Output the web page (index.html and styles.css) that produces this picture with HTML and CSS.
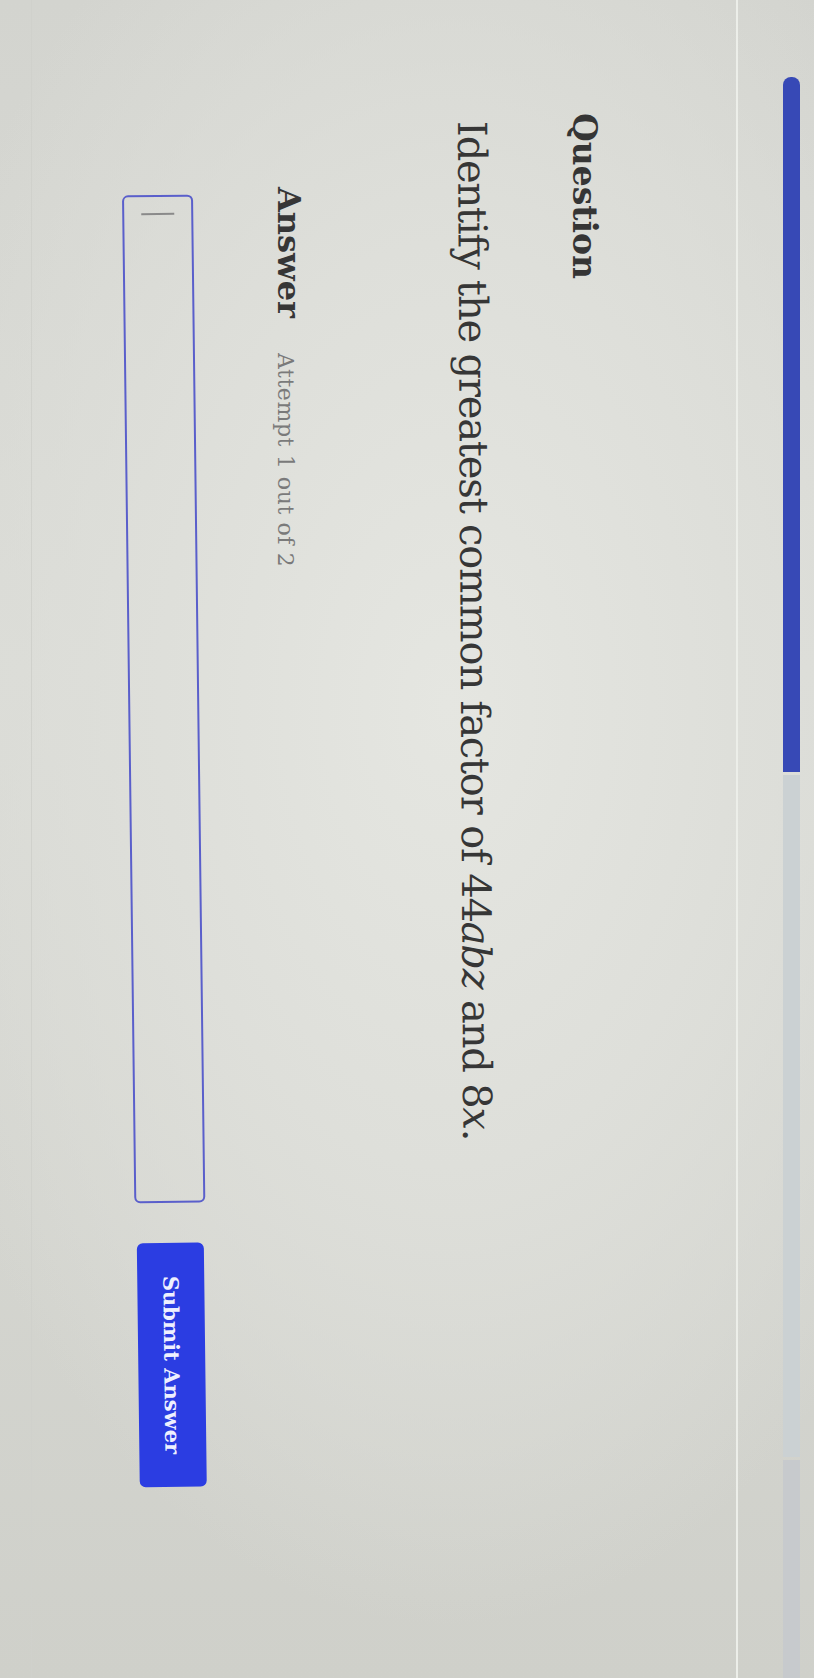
FILE: index.html
```html
<!DOCTYPE html>
<html lang="en">
<head>
<meta charset="utf-8">
<title>Question</title>
<link rel="stylesheet" href="styles.css">
</head>
<body>
<div class="viewport">
  <div class="page">
    <div class="progress">
      <div class="progress-fill"></div>
      <div class="progress-track"></div>
      <div class="progress-track progress-track-end"></div>
    </div>
    <main class="card">
      <h2 class="q-title">Question</h2>
      <p class="q-text">Identify the greatest common factor of <span class="math">44<i>abz</i></span> and <span class="math">8<i>x</i></span>.</p>
      <section class="answer">
        <div class="answer-head">
          <h3 class="answer-title">Answer</h3>
          <span class="attempt">Attempt 1 out of 2</span>
        </div>
        <div class="answer-row">
          <div class="answer-input"><span class="caret"></span></div>
          <button class="submit">Submit Answer</button>
        </div>
      </section>
    </main>
  </div>
</div>
</body>
</html>
```
FILE: styles.css
```css
html, body {
  margin: 0;
  padding: 0;
}
body {
  background: #d6d7d2;
}
.viewport {
  width: 814px;
  height: 1678px;
  overflow: hidden;
  background:
    radial-gradient(ellipse 70% 55% at 55% 42%, #e5e6e1 0%, #dedfda 50%, rgba(222,223,218,0) 100%),
    linear-gradient(180deg, #d3d4cf 0%, #dadbd6 40%, #cfd0ca 100%);
}
.page {
  width: 1678px;
  height: 814px;
  transform-origin: 0 0;
  transform: translateX(814px) rotate(90deg);
  font-family: "DejaVu Serif", "Liberation Serif", serif;
  color: #3a3a3a;
}
.progress {
  display: flex;
  gap: 3px;
  padding: 14px 0 0 77px;
  height: 17px;
}
.progress-fill {
  width: 695px;
  height: 17px;
  background: #3749b6;
  border-radius: 8px 0 0 8px;
}
.progress-track {
  width: 682px;
  height: 17px;
  background: #cbd1d3;
}
.progress-track-end {
  flex: 1;
  width: auto;
  background: #c7cacd;
}
.card {
  margin-top: 45px;
  border-top: 2px solid #eceee9;
  height: 704px;
  border-bottom: 1px solid #d0d1cc;
}
.q-title {
  margin: 135px 0 0 113px;
  font-size: 33px;
  line-height: 1;
  font-weight: bold;
  color: #353535;
}
.q-text {
  margin: 76px 0 0 121px;
  font-size: 40px;
  line-height: 1;
  letter-spacing: -1.2px;
  color: #363636;
  transform-origin: 0 50%;
  transform: rotate(-0.3deg);
}
.math i {
  font-style: italic;
}
.answer {
  margin: 147px 0 0 187px;
}
.answer-head {
  display: flex;
  align-items: baseline;
  gap: 35px;
}
.answer-title {
  margin: 0;
  font-size: 32px;
  line-height: 1;
  font-weight: bold;
  color: #363636;
}
.attempt {
  font-size: 22px;
  line-height: 1;
  color: #7a7a7a;
  letter-spacing: 0.6px;
}
.answer-row {
  display: flex;
  align-items: center;
  gap: 40px;
  margin: 80px 0 0 8px;
  transform-origin: 0 50%;
  transform: rotate(-0.7deg);
}
.answer-input {
  box-sizing: border-box;
  width: 1008px;
  height: 71px;
  border: 2px solid #5a5fcb;
  border-radius: 6px;
  display: flex;
  align-items: center;
  padding-left: 16px;
}
.caret {
  width: 2px;
  height: 33px;
  background: #8a8a8a;
}
.submit {
  box-sizing: border-box;
  width: 244px;
  height: 67px;
  border: none;
  border-radius: 6px;
  background: #2b3de2;
  color: #eef0ff;
  font-family: "DejaVu Serif", "Liberation Serif", serif;
  font-size: 21px;
  font-weight: bold;
  padding: 0;
}
```
